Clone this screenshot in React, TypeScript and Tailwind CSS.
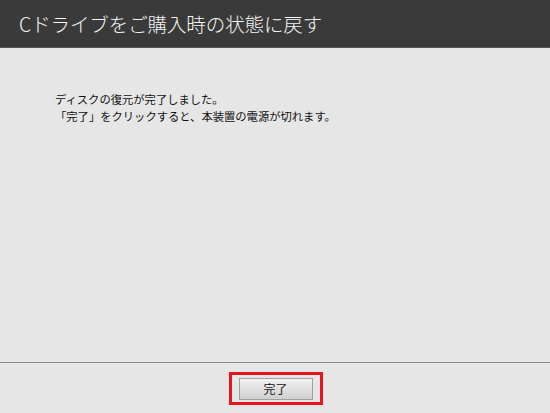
import React from "react";

const jp = { fontFamily: '"Noto Sans CJK JP", "Liberation Sans", sans-serif' };

export default function App() {
  return (
    <div className="w-[550px] h-[413px] flex flex-col bg-[#e6e6e6]" style={jp}>
      {/* header */}
      <div className="h-[48px] shrink-0 bg-[#3a3a3a] border-b border-[#555] flex items-center pl-[19px]">
        <h1 className="text-[19.5px] text-[#f4f4f4] font-light leading-none tracking-[-0.1px]">
          Cドライブをご購入時の状態に戻す
        </h1>
      </div>

      {/* body */}
      <div className="flex-1 pt-[43px] pl-[55px] text-[11.3px] leading-[17px] text-[#111]">
        <p>ディスクの復元が完了しました。</p>
        <p>「完了」をクリックすると、本装置の電源が切れます。</p>
      </div>

      {/* footer */}
      <div className="h-[51px] shrink-0 border-t border-[#8a8a8a] flex justify-center pt-[9px]">
        <div className="ml-[1px] w-[94px] h-[33px] border-[3px] border-[#e8141c] flex items-center justify-center">
          <button className="w-[74px] h-[22px] border border-[#a0a0a0] bg-gradient-to-b from-[#f2f2f2] to-[#cfcfcf] text-[12px] leading-none text-[#111]">
            完了
          </button>
        </div>
      </div>
    </div>
  );
}
